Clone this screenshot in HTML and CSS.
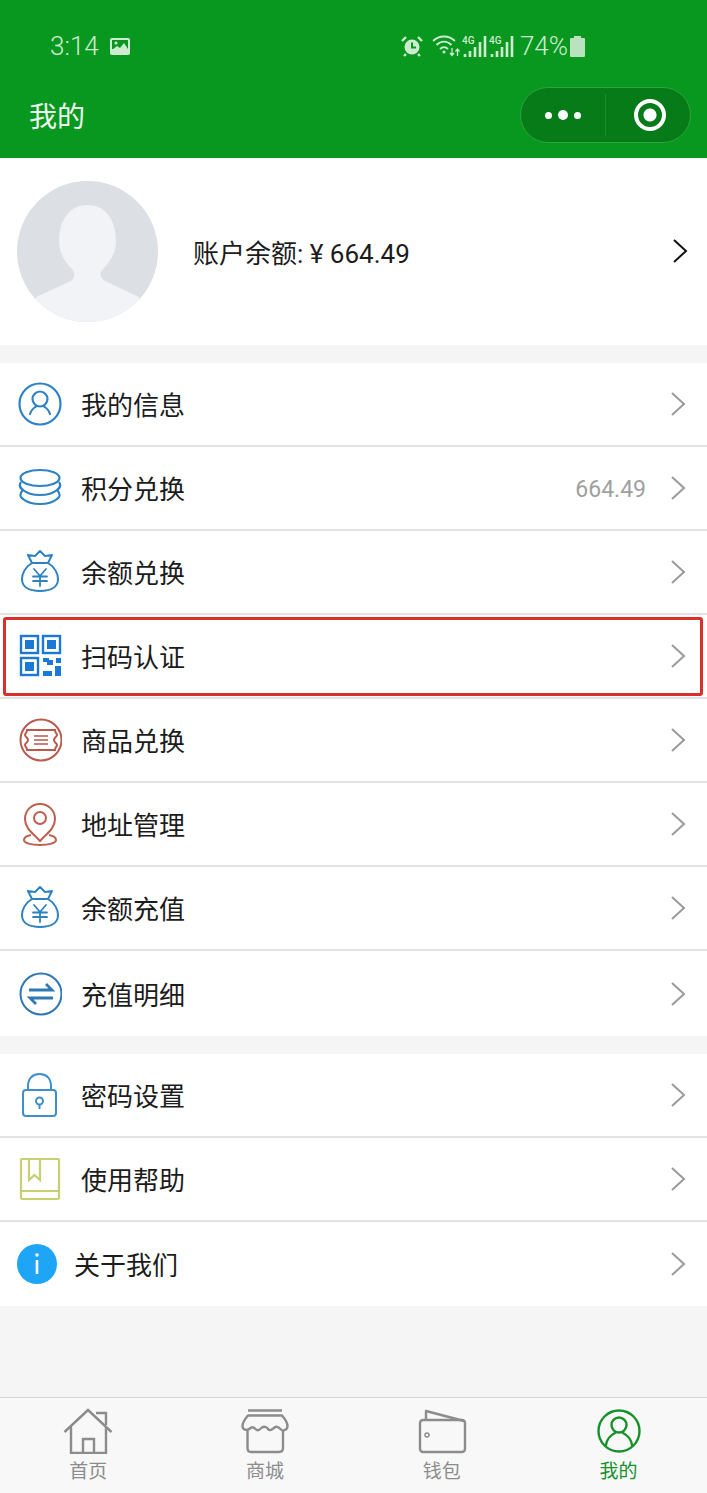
FILE: index.html
```html
<!DOCTYPE html>
<html lang="zh-CN">
<head>
  <meta charset="UTF-8">
  <meta name="viewport" content="width=device-width, initial-scale=1.0">
  <title>我的</title>
  <link rel="stylesheet" href="styles.css">
</head>
<body>
  <!-- shared icons -->
  <svg class="defs" width="0" height="0">
    <symbol id="chevron" viewBox="0 0 16 26">
      <path d="M2 2 L14 13 L2 24" fill="none" stroke="currentColor" stroke-width="2"/>
    </symbol>
    <symbol id="bag" viewBox="0 0 44 44">
      <g fill="none" stroke="#2f82c4" stroke-width="2" stroke-linejoin="round" stroke-linecap="round">
        <path d="M14 13 C7 17 4 24 4 29 C4 37 11 41 22 41 C33 41 40 37 40 29 C40 24 37 17 30 13 Z"/>
        <path d="M14 13 L10 5 L17 6 L22 1 L27 6 L34 5 L30 13"/>
        <path d="M16 19 L22 26 L28 19 M22 26 V36 M15 26.500 H29 M15 31 H29" stroke-width="1.800"/>
      </g>
    </symbol>
  </svg>

  <header class="top">
    <div class="status">
      <div class="status-left">
        <span class="clock">3:14</span>
        <svg class="st-img" width="22" height="19" viewBox="0 0 22 19">
          <rect x="1" y="1" width="20" height="17" rx="2" fill="#cdeccf"/>
          <rect x="3" y="3" width="16" height="9" fill="#08981f"/>
          <circle cx="7" cy="6" r="1.6" fill="#cdeccf"/>
          <path d="M3 13 L8 9 L11 11 L15 6 L19 12 V14 H3 Z" fill="#cdeccf"/>
        </svg>
      </div>
      <div class="status-right">
        <svg width="22" height="22" viewBox="0 0 22 22">
          <circle cx="11" cy="12" r="7.5" fill="#cdeccf"/>
          <path d="M11 7.5 V12.5 H15" fill="none" stroke="#08981f" stroke-width="2"/>
          <path d="M1 6 L5 2 M21 6 L17 2 M5 19 L3 21 M17 19 L19 21" stroke="#cdeccf" stroke-width="2.4"/>
        </svg>
        <svg class="st-wifi" width="28" height="24" viewBox="0 0 28 24">
          <g fill="none" stroke="#cdeccf" stroke-width="1.8">
            <path d="M1 7 C7 1 17 1 23 7"/>
            <path d="M4.5 11 C9 6.5 15 6.5 19.5 11"/>
            <path d="M8 15 C10.500 12.500 13.500 12.500 16 15"/>
          </g>
          <circle cx="12" cy="18" r="1.6" fill="#cdeccf"/>
          <path d="M20 14 V21 M18 19 L20 21.500 L22 19 M25.500 22 V15 M23.500 17.500 L25.500 15 L27.500 17.500" fill="none" stroke="#cdeccf" stroke-width="1.300"/>
        </svg>
        <svg class="st-sig" width="25" height="22" viewBox="0 0 25 22">
          <text x="0" y="9" class="st-4g">4G</text>
          <path d="M3 19 V22 M8 16 V22 M13 12 V22 M18 7 V22 M23 1 V22" stroke="#cdeccf" stroke-width="2.600"/>
        </svg>
        <svg class="st-sig" width="25" height="22" viewBox="0 0 25 22">
          <text x="0" y="9" class="st-4g">4G</text>
          <path d="M3 19 V22 M8 16 V22 M13 12 V22 M18 7 V22 M23 1 V22" stroke="#cdeccf" stroke-width="2.600"/>
        </svg>
        <span class="pct">74%</span>
        <svg class="st-bat" width="15" height="21" viewBox="0 0 15 21">
          <path d="M4 0 H11 V2 H14 Q15 2 15 3 V20 Q15 21 14 21 H1 Q0 21 0 20 V3 Q0 2 1 2 H4 Z" fill="#b9e3bf"/>
        </svg>
      </div>
    </div>
    <div class="nav">
      <h1 class="title">我的</h1>
      <div class="capsule">
        <div class="cap-side cap-left">
          <i class="dot"></i><i class="dot big"></i><i class="dot"></i>
        </div>
        <div class="cap-side cap-right">
          <i class="target"></i>
        </div>
      </div>
    </div>
  </header>

  <section class="profile">
    <svg class="avatar" width="141" height="141" viewBox="0 0 141 141">
      <defs>
        <clipPath id="av"><circle cx="70.500" cy="70.500" r="70.500"/></clipPath>
      </defs>
      <circle cx="70.500" cy="70.500" r="70.500" fill="#dcdfe3"/>
      <g clip-path="url(#av)" fill="#f2f3f7">
        <path d="M70.500 24 C52 24 42 40 42 60 C42 74 50 83 55 88 C59 92 58 97 54 100 L19 116 V141 H122 V116 L88 100 C83 97 82 92 86 88 C91 83 99 74 99 60 C99 40 89 24 70.500 24 Z"/>
      </g>
    </svg>
    <div class="balance">账户余额: ¥ 664.49</div>
    <svg class="chev dark" width="16" height="26"><use href="#chevron"/></svg>
  </section>

  <section class="list list-main">
    <div class="row">
      <svg class="ico" width="44" height="44" viewBox="0 0 44 44">
        <g fill="none" stroke="#2f82c8" stroke-width="2.200" stroke-linecap="round">
          <circle cx="22" cy="22" r="20.500"/>
          <circle cx="22" cy="17" r="7.500"/>
          <path d="M12 32 C14 26 18 24.500 19 24 M32 32 C30 26 26 24.500 25 24"/>
        </g>
      </svg>
      <span class="label">我的信息</span>
      <svg class="chev" width="16" height="26"><use href="#chevron"/></svg>
    </div>
    <div class="row">
      <svg class="ico" width="44" height="44" viewBox="0 0 44 44">
        <g fill="none" stroke="#2f82c4" stroke-width="2.200">
          <ellipse cx="22" cy="12" rx="19.500" ry="8"/>
          <path d="M3 16 C1 19 2 22 5 24 C9 27.500 15 29 22 29 C29 29 35 27.500 39 24 C42 22 43 19 41 16"/>
          <path d="M5 24 C1 28 2 31 5 33 C9 36.500 15 38 22 38 C29 38 35 36.500 39 33 C42 31 43 28 39 24"/>
        </g>
      </svg>
      <span class="label">积分兑换</span>
      <span class="extra">664.49</span>
      <svg class="chev" width="16" height="26"><use href="#chevron"/></svg>
    </div>
    <div class="row">
      <svg class="ico" width="44" height="44"><use href="#bag"/></svg>
      <span class="label">余额兑换</span>
      <svg class="chev" width="16" height="26"><use href="#chevron"/></svg>
    </div>
    <div class="row marked">
      <svg class="ico" width="44" height="44" viewBox="0 0 44 44">
        <g fill="none" stroke="#1c78d6" stroke-width="2.400">
          <rect x="3" y="2" width="17" height="17"/>
          <rect x="25" y="2" width="17" height="17"/>
          <rect x="3" y="24" width="17" height="17"/>
        </g>
        <g fill="#1c78d6">
          <rect x="7" y="6" width="9" height="9"/>
          <rect x="29" y="6" width="9" height="9"/>
          <rect x="7" y="28" width="9" height="9"/>
          <path d="M25 24 H31 V26 H35 V31 H29 V28 H25 Z"/>
          <rect x="38" y="24" width="5" height="5"/>
          <rect x="37" y="32" width="6" height="10"/>
          <rect x="25" y="37" width="9" height="5"/>
        </g>
      </svg>
      <span class="label">扫码认证</span>
      <svg class="chev" width="16" height="26"><use href="#chevron"/></svg>
    </div>
    <div class="row">
      <svg class="ico" width="44" height="44" viewBox="0 0 44 44">
        <g fill="none" stroke="#b85a4c" stroke-width="2">
          <circle cx="23" cy="22" r="20.500"/>
          <path d="M9 12 H37 C37 15 39 15.500 39 17 C39 19 36 19 36 22 C36 25 39 25 39 27 C39 29 37 29 37 32 H9 C9 29 7 29 7 27 C7 25 10 25 10 22 C10 19 7 19 7 17 C7 15.500 9 15 9 12 Z"/>
          <path d="M16 18 H30 M16 22 H30 M16 26 H30" stroke-width="1.600"/>
        </g>
      </svg>
      <span class="label">商品兑换</span>
      <svg class="chev" width="16" height="26"><use href="#chevron"/></svg>
    </div>
    <div class="row">
      <svg class="ico" width="44" height="44" viewBox="0 0 44 44">
        <g fill="none" stroke="#bd5f4e" stroke-width="2">
          <path d="M22 39 C16 32 7 27 7 17 C7 8 14 2 22 2 C30 2 37 8 37 17 C37 27 28 32 22 39 Z"/>
          <circle cx="22" cy="16" r="6"/>
          <path d="M13 33 C8 34 6 36 6 38 C6 41 13 43 22 43 C31 43 38 41 38 38 C38 36 36 34 31 33"/>
        </g>
      </svg>
      <span class="label">地址管理</span>
      <svg class="chev" width="16" height="26"><use href="#chevron"/></svg>
    </div>
    <div class="row">
      <svg class="ico" width="44" height="44"><use href="#bag"/></svg>
      <span class="label">余额充值</span>
      <svg class="chev" width="16" height="26"><use href="#chevron"/></svg>
    </div>
    <div class="row">
      <svg class="ico" width="44" height="44" viewBox="0 0 44 44">
        <circle cx="23" cy="22" r="20.500" fill="none" stroke="#2f78b4" stroke-width="2"/>
        <path d="M11 18 H34 L28 12 M35 26 H12 L18 32" fill="none" stroke="#2f78b4" stroke-width="2.800"/>
      </svg>
      <span class="label">充值明细</span>
      <svg class="chev" width="16" height="26"><use href="#chevron"/></svg>
    </div>
  </section>

  <section class="list list-second">
    <div class="row">
      <svg class="ico" width="44" height="46" viewBox="0 0 44 46">
        <g fill="none" stroke="#3f8fcc" stroke-width="2">
          <rect x="5" y="18" width="33" height="26" rx="3"/>
          <path d="M10 18 V14 C10 6 15 2 21.500 2 C28 2 33 6 33 14 V18"/>
          <circle cx="21.500" cy="29" r="3.500"/>
          <path d="M21.500 32 V37"/>
        </g>
      </svg>
      <span class="label">密码设置</span>
      <svg class="chev" width="16" height="26"><use href="#chevron"/></svg>
    </div>
    <div class="row">
      <svg class="ico" width="44" height="44" viewBox="0 0 44 44">
        <g fill="none" stroke="#c6cf72" stroke-width="2.200">
          <rect x="3" y="2" width="38" height="40" rx="1"/>
          <path d="M3 34 H41"/>
          <path d="M11 2 V23 L16.500 18 L22 23 V2"/>
        </g>
      </svg>
      <span class="label">使用帮助</span>
      <svg class="chev" width="16" height="26"><use href="#chevron"/></svg>
    </div>
    <div class="row row-info">
      <svg class="ico" width="40" height="40" viewBox="0 0 40 40">
        <circle cx="20" cy="20" r="20" fill="#1ea5f6"/>
        <circle cx="20" cy="11" r="1.800" fill="#fff"/>
        <rect x="18.700" y="16" width="2.600" height="14" fill="#fff"/>
      </svg>
      <span class="label">关于我们</span>
      <svg class="chev" width="16" height="26"><use href="#chevron"/></svg>
    </div>
  </section>

  <div class="spacer"></div>

  <nav class="tabs">
    <div class="tab">
      <svg width="50" height="46" viewBox="0 0 50 46">
        <g fill="none" stroke="#8c8c8c" stroke-width="2.400">
          <path d="M1.500 24 L25 2 L48.500 24"/>
          <path d="M33 5 H43 V17"/>
          <path d="M8 19 V45 H43 V19"/>
          <path d="M20 45 V31 H31 V45"/>
        </g>
      </svg>
      <span>首页</span>
    </div>
    <div class="tab">
      <svg width="50" height="46" viewBox="0 0 50 46">
        <g fill="none" stroke="#8c8c8c" stroke-width="2.400" stroke-linejoin="round">
          <path d="M8 2.500 H42"/>
          <path d="M8 7.500 H42 C45 11 47.500 15 47.500 18 C47.500 22 43 23.500 41 21.500 C39 19.500 37 17.500 34.500 19.500 C32 21.500 31 23.500 28.500 21.500 C27 19.500 24.500 17.500 22 19.500 C20 21.500 18 23.500 16 21.500 C14 19.500 12 18 10 20.500 C7 23 2.500 22 2.500 18 C2.500 15 5 11 8 7.500 Z"/>
          <path d="M7.500 22 V40 Q7.500 44 11 44 H39 Q43 44 43 40 V22"/>
        </g>
      </svg>
      <span>商城</span>
    </div>
    <div class="tab">
      <svg width="50" height="46" viewBox="0 0 50 46">
        <g fill="none" stroke="#8c8c8c" stroke-width="2.400" stroke-linejoin="round">
          <path d="M9 12 V3 L47 13"/>
          <rect x="3" y="12" width="45" height="32" rx="3"/>
          <circle cx="10" cy="27" r="2" stroke-width="1.500"/>
        </g>
      </svg>
      <span>钱包</span>
    </div>
    <div class="tab active">
      <svg width="46" height="46" viewBox="0 0 46 46">
        <g fill="none" stroke="#17912b" stroke-width="2.400" stroke-linecap="round">
          <circle cx="23" cy="23" r="20.500"/>
          <circle cx="23" cy="17" r="7.500"/>
          <path d="M10 37 C11 30 15 27 19 25 M36 37 C35 30 31 27 27 25"/>
        </g>
      </svg>
      <span>我的</span>
    </div>
  </nav>
</body>
</html>
```
FILE: styles.css
```css
* {
  box-sizing: border-box;
}

html, body {
  height: 100%;
}

body {
  margin: 0;
  display: flex;
  flex-direction: column;
  background-color: #f5f5f5;
  color: #1c1c1c;
  font-family: Roboto, "Noto Sans CJK SC", sans-serif;
}

.defs {
  display: block;
  height: 0;
}

/* Header */
.top {
  height: 158px;
  flex-shrink: 0;
  background-color: #08981f;
  padding-top: 34px;
}

.status {
  height: 24px;
  padding: 0 122px 0 50px;
  display: flex;
  justify-content: space-between;
  align-items: center;
  color: #cdeccf;
}

.status-left,
.status-right {
  display: flex;
  align-items: center;
}

.clock {
  font-size: 26px;
  font-weight: 300;
  margin-right: 10px;
}

.st-wifi {
  margin-left: 9px;
}

.st-sig {
  margin-left: 2px;
}

.st-4g {
  font-family: Roboto, sans-serif;
  font-size: 10px;
  font-weight: 500;
  fill: #cdeccf;
}

.pct {
  font-size: 26px;
  font-weight: 300;
  margin-left: 6px;
  margin-right: 2px;
}

.nav {
  margin-top: 29px;
  height: 56px;
  padding: 0 16px 0 29px;
  display: flex;
  justify-content: space-between;
  align-items: center;
}

.title {
  margin: 0;
  font-size: 28px;
  font-weight: 400;
  color: #eef8ef;
}

.capsule {
  width: 171px;
  height: 56px;
  display: flex;
  background-color: #077b18;
  border: 1px solid #2ba53f;
  border-radius: 28px;
}

.cap-side {
  display: flex;
  justify-content: center;
  align-items: center;
  gap: 6px;
}

.cap-left {
  width: 84px;
}

.cap-right {
  flex: 1;
  border-left: 1px solid #1c8c2f;
  margin: 6px 0;
  padding-left: 4px;
}

.dot {
  width: 7px;
  height: 7px;
  border-radius: 50%;
  background-color: #fff;
}

.dot.big {
  width: 10px;
  height: 10px;
}

.target {
  width: 32px;
  height: 32px;
  border: 4px solid #fff;
  border-radius: 50%;
  display: flex;
  background: radial-gradient(circle, #fff 0, #fff 6px, transparent 7px);
}

/* Profile */
.profile {
  height: 187px;
  flex-shrink: 0;
  background-color: #fff;
  padding: 0 19px 0 17px;
  display: flex;
  align-items: center;
}

.avatar {
  flex-shrink: 0;
}

.balance {
  flex: 1;
  margin-left: 35px;
  font-size: 26px;
}

.chev {
  flex-shrink: 0;
  color: #9a9a9a;
}

.chev.dark {
  color: #111;
  margin-bottom: 2px;
}

/* Lists */
.list {
  flex-shrink: 0;
  display: flex;
  flex-direction: column;
  background-color: #fff;
}

.list-main {
  margin-top: 18px;
  height: 673px;
}

.list-second {
  margin-top: 18px;
  height: 252px;
}

.row {
  flex: 0 0 84px;
  position: relative;
  display: flex;
  align-items: center;
  padding: 0 21px 0 18px;
  border-bottom: 2px solid #e2e2e2;
}

.row:last-child {
  flex: 1;
  border-bottom: none;
}

.ico {
  flex-shrink: 0;
  margin-right: 19px;
}

.row-info {
  padding-left: 17px;
}

.row-info .ico {
  margin-right: 17px;
}

.label {
  flex: 1;
  font-size: 26px;
  margin-bottom: 1px;
}

.extra {
  font-size: 23px;
  color: #a0a0a0;
  margin-right: 24px;
  margin-top: 2px;
}

/* the red annotation round one row */
.marked::after {
  content: "";
  position: absolute;
  top: 2px;
  left: 3px;
  right: 4px;
  bottom: 1px;
  border: 3px solid #d9302c;
  border-radius: 3px;
}

.spacer {
  flex: 1;
}

/* Bottom tabs */
.tabs {
  height: 96px;
  flex-shrink: 0;
  display: grid;
  grid-template-columns: repeat(4, 1fr);
  background-color: #f8f8f8;
  border-top: 1px solid #d6d6d6;
  padding-top: 10px;
}

.tab {
  display: flex;
  flex-direction: column;
  align-items: center;
  font-size: 19px;
  line-height: 26px;
  color: #8c8c8c;
}

.tab span {
  margin-top: 5px;
}

.tab.active {
  color: #17912b;
}
```
